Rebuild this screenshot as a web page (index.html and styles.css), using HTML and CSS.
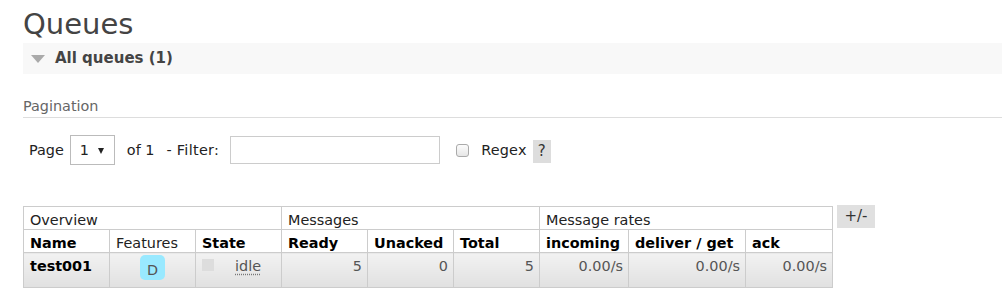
FILE: index.html
```html
<!DOCTYPE html>
<html lang="en">
<head>
  <meta charset="UTF-8" />
  <title>Queues</title>
  <link rel="stylesheet" href="styles.css">
</head>
<body>
  <div id="main">
    <h1>Queues</h1>

    <div class="section">
      <h2 class="section-title"><span class="toggle"></span>All queues (1)</h2>

      <div class="hider">
        <h3>Pagination</h3>
        <div class="pagination">
          <label class="page-label">Page</label>
          <span class="select-wrap">
            <select id="page-select"><option>1</option></select>
          </span>
          <span class="of">of 1</span>
          <label class="filter-label">- Filter:</label>
          <input type="text" class="filter" />
          <span class="checkbox"></span>
          <label class="regex-label">Regex</label>
          <span class="help">?</span>
        </div>

        <div class="table-wrap">
          <table class="list">
            <colgroup>
              <col style="width:86px"><col style="width:86px"><col style="width:86px">
              <col style="width:86px"><col style="width:86px"><col style="width:86px">
              <col style="width:89px"><col style="width:117px"><col style="width:87px">
            </colgroup>
            <thead>
              <tr class="group">
                <th colspan="3">Overview</th>
                <th colspan="3">Messages</th>
                <th colspan="3">Message rates</th>
              </tr>
              <tr>
                <th>Name</th>
                <th class="plain">Features</th>
                <th>State</th>
                <th>Ready</th>
                <th>Unacked</th>
                <th>Total</th>
                <th>incoming</th>
                <th>deliver / get</th>
                <th>ack</th>
              </tr>
            </thead>
            <tbody>
              <tr class="alt">
                <td class="name">test001</td>
                <td class="features"><abbr class="badge" title="durable">D</abbr></td>
                <td class="state"><span class="status-grey"></span><abbr class="idle" title="Idle">idle</abbr></td>
                <td class="r">5</td>
                <td class="r">0</td>
                <td class="r">5</td>
                <td class="r">0.00/s</td>
                <td class="r">0.00/s</td>
                <td class="r">0.00/s</td>
              </tr>
            </tbody>
          </table>
          <span class="columns-btn">+/-</span>
        </div>
      </div>
    </div>
  </div>
</body>
</html>
```

FILE: styles.css
```css
html, body {
  margin: 0;
  font-family: "DejaVu Sans", Verdana, sans-serif;
  font-size: 14.4px;
  color: #333;
  background: #fff;
}
#main {
  padding-left: 23px;
}
h1 {
  margin: 8px 0 2px;
  font-size: 29px;
  line-height: 33px;
  font-weight: normal;
  color: #444;
}
.section-title {
  margin: 0;
  height: 31px;
  line-height: 31px;
  padding-left: 8px;
  background: #f8f8f8;
  font-size: 15px;
  font-weight: bold;
  color: #444;
  display: flex;
  align-items: center;
}
.toggle {
  width: 0;
  height: 0;
  border-left: 7px solid transparent;
  border-right: 7px solid transparent;
  border-top: 8px solid #aaa;
  margin-right: 10px;
  margin-top: 1px;
}
h3 {
  margin: 23px 0 0;
  padding-bottom: 2px;
  font-size: 14.4px;
  line-height: 18px;
  font-weight: normal;
  color: #666;
  border-bottom: 1px solid #ddd;
}
.pagination {
  display: flex;
  align-items: center;
  margin-top: 17px;
  padding-left: 6px;
  height: 30px;
  color: #222;
}
.select-wrap {
  position: relative;
  margin-left: 6px;
}
.select-wrap select {
  appearance: none;
  -webkit-appearance: none;
  width: 45px;
  height: 30px;
  border: 1px solid #bbb;
  border-radius: 0;
  background: #fff;
  font-family: inherit;
  font-size: 14.4px;
  color: #222;
  padding: 0 0 0 9px;
  margin: 0;
}
.select-wrap::after {
  content: '';
  position: absolute;
  right: 11px;
  top: 13px;
  border-left: 3px solid transparent;
  border-right: 3px solid transparent;
  border-top: 6px solid #222;
  pointer-events: none;
}
.of {
  margin-left: 12px;
}
.filter-label {
  margin-left: 12px;
  letter-spacing: 0.3px;
}
.filter {
  width: 210px;
  height: 28px;
  box-sizing: border-box;
  border: 1px solid #ccc;
  margin: 0 0 0 11px;
  padding: 0 4px;
  font-family: inherit;
  font-size: 14.4px;
}
.checkbox {
  width: 13px;
  height: 13px;
  box-sizing: border-box;
  border: 1px solid #aaa;
  border-radius: 3px;
  background: linear-gradient(#fcfcfc, #e6e6e6);
  margin-left: 16px;
  margin-top: 1px;
}
.regex-label {
  margin-left: 12px;
  letter-spacing: 0.2px;
}
.help {
  width: 18px;
  height: 23px;
  line-height: 23px;
  text-align: center;
  background: #ddd;
  margin-left: 6px;
  margin-top: 3px;
  color: #333;
  font-size: 15px;
}
.table-wrap {
  display: flex;
  align-items: flex-start;
  gap: 4px;
  margin-top: 41px;
}
table.list {
  border-collapse: collapse;
  table-layout: fixed;
  width: 809px;
  border: 1px solid #ccc;
}
table.list th,
table.list td {
  border: 1px solid #ccc;
  padding: 4px 6px 0;
  line-height: 18px;
  text-align: left;
  vertical-align: top;
  white-space: nowrap;
  overflow: hidden;
}
table.list th {
  color: #000;
  font-weight: bold;
}
table.list tr.group th,
table.list th.plain {
  font-weight: normal;
  color: #222;
}
table.list td {
  padding-bottom: 12px;
  color: #555;
}
tr.alt td {
  background: linear-gradient(#f2f2f2, #e1e1e1);
}
td.name {
  font-weight: bold;
  color: #000 !important;
}
td.r {
  text-align: right !important;
  padding-right: 5px !important;
}
td.features {
  text-align: center !important;
  padding-top: 2px !important;
  padding-bottom: 0 !important;
}
.badge {
  display: inline-block;
  width: 25px;
  height: 19px;
  padding-top: 6px;
  line-height: 18px;
  border-radius: 5px;
  background: #99e9ff;
  color: #555;
  text-decoration: none;
  text-align: center;
}
.status-grey {
  display: inline-block;
  width: 12px;
  height: 12px;
  background: #ddd;
  vertical-align: top;
  margin-top: 2px;
}
.idle {
  margin-left: 21px;
  color: #555;
  text-decoration: underline dotted #777;
  text-underline-offset: 3px;
}
.columns-btn {
  display: inline-block;
  width: 38px;
  height: 23px;
  line-height: 22px;
  text-align: center;
  background: #e0e0e0;
  color: #333;
  font-size: 15px;
  margin-top: -1px;
}
```
